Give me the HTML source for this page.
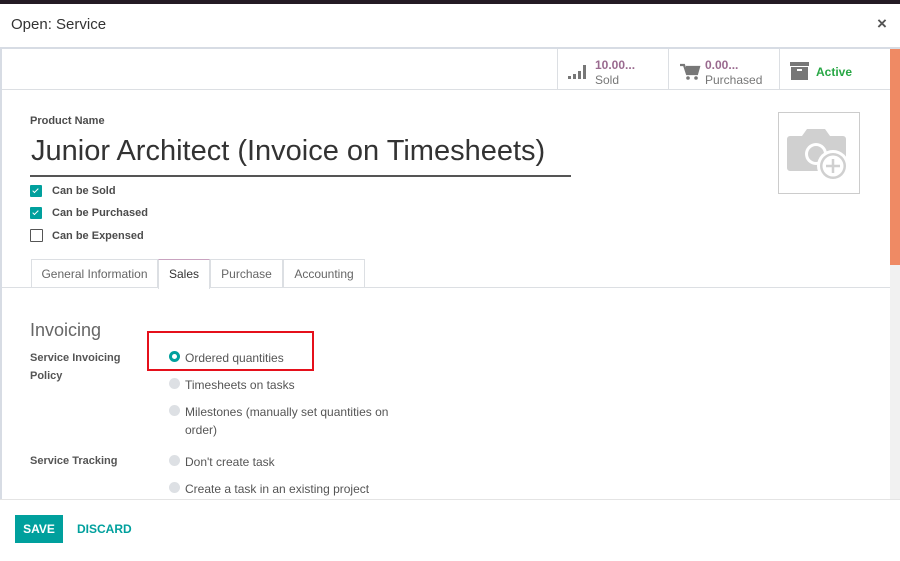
<!DOCTYPE html>
<html><head><style>
*{margin:0;padding:0;box-sizing:border-box}
body{width:900px;height:561px;overflow:hidden;background:#fff;font-family:"Liberation Sans",sans-serif;color:#4c4c4c;position:relative;font-size:12px}
.a{position:absolute}
.b{font-weight:bold;color:#4c4c4c}
.chk{position:absolute;left:30px;width:12px;height:12px;background:#00a09d;border-radius:1px}
.chk:after{content:"";position:absolute;left:4px;top:2px;width:2px;height:5px;border:solid #fff;border-width:0 1.5px 1.5px 0;transform:rotate(45deg)}
.rad{position:absolute;left:169px;width:11px;height:11px;border-radius:50%;background:#dde0e4}
.tab{position:absolute;top:259px;height:29px;border:1px solid #dcdfe3;border-bottom:none;font-size:12px;color:#666;text-align:center;line-height:28px}
.lbl{font-size:12px;color:#555}
</style></head><body>
<div class="a" style="left:0;top:0;width:900px;height:4px;background:#241a24"></div>
<div class="a" style="left:11px;top:16px;font-size:15px;color:#333">Open: Service</div>
<div class="a" style="left:877px;top:14px;font-size:17px;color:#555;font-weight:bold">×</div>
<div class="a" style="left:0;top:47px;width:900px;height:2px;background:#d7dce4"></div>
<div class="a" style="left:0;top:49px;width:2px;height:450px;background:#d7dce4"></div>
<div class="a" style="left:890px;top:49px;width:10px;height:216px;background:#ef8a64"></div>
<div class="a" style="left:890px;top:265px;width:10px;height:234px;background:#f1f1f1"></div>
<div class="a" style="left:2px;top:89px;width:888px;height:1px;background:#dcdfe3"></div>
<div class="a" style="left:557px;top:49px;width:1px;height:40px;background:#dcdfe3"></div>
<div class="a" style="left:668px;top:49px;width:1px;height:40px;background:#dcdfe3"></div>
<div class="a" style="left:779px;top:49px;width:1px;height:40px;background:#dcdfe3"></div>
<svg class="a" style="left:568px;top:63px" width="22" height="18"><g fill="#777"><rect x="0" y="13" width="3" height="3"/><rect x="5" y="11" width="3" height="5"/><rect x="10" y="8" width="3" height="8"/><rect x="15" y="2" width="3" height="14"/></g></svg>
<div class="a" style="left:595px;top:58px;font-size:12px;font-weight:bold;color:#9a6a8f">10.00...</div>
<div class="a" style="left:595px;top:73px;font-size:12px;color:#777">Sold</div>
<svg class="a" style="left:679px;top:63px" width="22" height="18"><path d="M1 2h4l3 9h10l2-7H7" fill="none" stroke="#777" stroke-width="2.2"/><rect x="7" y="5" width="12" height="5" fill="#777"/><circle cx="9" cy="15" r="1.8" fill="#777"/><circle cx="17" cy="15" r="1.8" fill="#777"/></svg>
<div class="a" style="left:705px;top:58px;font-size:12px;font-weight:bold;color:#9a6a8f">0.00...</div>
<div class="a" style="left:705px;top:73px;font-size:12px;color:#777">Purchased</div>
<svg class="a" style="left:790px;top:62px" width="20" height="19"><rect x="0" y="0" width="19" height="4" fill="#777"/><rect x="1" y="5" width="17" height="13" fill="#777"/><rect x="7" y="7" width="5" height="2" fill="#fff"/></svg>
<div class="a" style="left:816px;top:65px;font-size:12px;font-weight:bold;color:#28a745">Active</div>
<div class="a b" style="left:30px;top:115px;font-size:11px">Product Name</div>
<div class="a" style="left:31px;top:135px;font-size:29px;color:#333">Junior Architect (Invoice on Timesheets)</div>
<div class="a" style="left:30px;top:175px;width:541px;height:2px;background:#555"></div>
<div class="a" style="left:778px;top:112px;width:82px;height:82px;border:1px solid #ccc"></div>
<svg class="a" style="left:786px;top:126px" width="66" height="58"><path d="M4 10h12l5-7h18l5 7h13a3 3 0 0 1 3 3v29a3 3 0 0 1-3 3H4a3 3 0 0 1-3-3V13a3 3 0 0 1 3-3z" fill="#d0d0d0"/><circle cx="30" cy="28" r="11" fill="#fff"/><circle cx="30" cy="28" r="8" fill="#d0d0d0"/><circle cx="47" cy="40" r="16" fill="#fff"/><circle cx="47" cy="40" r="13" fill="#d0d0d0"/><circle cx="47" cy="40" r="10.5" fill="#fff"/><path d="M47 33v14M40 40h14" stroke="#d0d0d0" stroke-width="2.5"/></svg>
<div class="chk" style="top:185px"></div><div class="a b" style="left:52px;top:185px;font-size:11px">Can be Sold</div>
<div class="chk" style="top:207px"></div><div class="a b" style="left:52px;top:207px;font-size:11px">Can be Purchased</div>
<div class="a" style="left:30px;top:229px;width:13px;height:13px;border:1px solid #555;border-radius:1px"></div><div class="a b" style="left:52px;top:230px;font-size:11px">Can be Expensed</div>
<div class="a" style="left:2px;top:287px;width:888px;height:1px;background:#dcdfe3"></div>
<div class="tab" style="left:31px;width:127px">General Information</div>
<div class="tab" style="left:158px;width:52px;background:#fff;height:30px;color:#333;border-top:1px solid #c9a3c0">Sales</div>
<div class="tab" style="left:210px;width:73px">Purchase</div>
<div class="tab" style="left:283px;width:82px">Accounting</div>
<div class="a" style="left:30px;top:320px;font-size:18px;color:#666">Invoicing</div>
<div class="a b" style="left:30px;top:349px;font-size:11px;line-height:18px;color:#555">Service Invoicing<br>Policy</div>
<div class="a b" style="left:30px;top:455px;font-size:11px;color:#555">Service Tracking</div>
<div class="a" style="left:147px;top:331px;width:167px;height:40px;border:2px solid #e5101b"></div>
<div class="rad" style="top:351px;background:#00a09d"></div><div class="a" style="left:172px;top:354px;width:5px;height:5px;border-radius:50%;background:#fff"></div>
<div class="a lbl" style="left:185px;top:351px">Ordered quantities</div>
<div class="rad" style="top:378px"></div><div class="a lbl" style="left:185px;top:378px">Timesheets on tasks</div>
<div class="rad" style="top:405px"></div><div class="a lbl" style="left:185px;top:403px;line-height:18px">Milestones (manually set quantities on<br>order)</div>
<div class="rad" style="top:455px"></div><div class="a lbl" style="left:185px;top:455px">Don't create task</div>
<div class="rad" style="top:482px"></div><div class="a lbl" style="left:185px;top:482px">Create a task in an existing project</div>
<div class="a" style="left:0;top:499px;width:900px;height:62px;background:#fff;border-top:1px solid #e4e4e4"></div>
<div class="a" style="left:15px;top:515px;width:48px;height:28px;background:#00a09d;color:#fff;font-weight:bold;font-size:12px;text-align:center;line-height:28px">SAVE</div>
<div class="a" style="left:77px;top:522px;color:#00a09d;font-weight:bold;font-size:12px">DISCARD</div>
</body></html>
